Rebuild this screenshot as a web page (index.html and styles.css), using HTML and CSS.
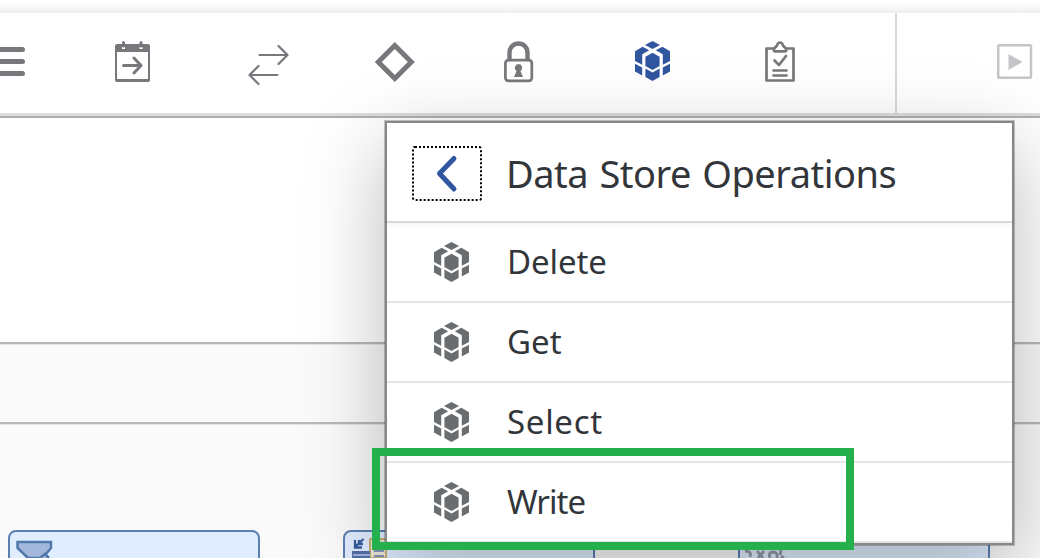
FILE: index.html
```html
<!DOCTYPE html>
<html lang="en">
<head>
<meta charset="utf-8">
<title>Data Store Operations</title>
<link rel="stylesheet" href="styles.css">
</head>
<body>
<svg class="defs" aria-hidden="true">
  <symbol id="cube" viewBox="0 0 35 40">
    <path d="M17.500 0l7.500 4-7.500 4-7.500-4zM0 10.300L7.600 5.800 14.200 9.300 7.200 13.200V23.700L0 20zM35 10.300L27.400 5.800 20.800 9.300 27.800 13.200V23.700L35 20zM17.500 11.700l7.100 4v9.400l-7.100 3.900-7.100-3.900v-9.400zM0 22.800l7.200 3.800v8L0 30.400zM35 22.800l-7.200 3.800v8l7.200-4.200zM10.400 27.500l7.100 4 7.100-4V36l-7.100 4-7.100-4z"/>
  </symbol>
</svg>
<div class="app">
  <div class="topband"></div>
  <header class="toolbar">
    <svg class="tool" width="25" height="46" viewBox="0 40 25 46"><path class="stroke w5" d="M-5 49.500H22.500M-5 61.500H22.500M-5 73.500H22.500"/></svg>
    <svg class="tool calendar" width="36" height="46" viewBox="115 40 36 46"><path class="stroke w3" d="M123.500 42.500V46M141 42.500V46"/><path fill-rule="evenodd" d="M117 44H148Q150 44 150 46V80Q150 82 148 82H117Q115 82 115 80V46Q115 44 117 44zM117 52V79H148V52zM122 47V49H125V47zM139.500 47V49H142.500V47z"/><path class="stroke w3" d="M123.500 65.500H141M134 58L141 65.500 134 73"/></svg>
    <svg class="tool arrows" width="42" height="46" viewBox="248 40 42 46"><path class="stroke w2" d="M259.500 55H287M278.500 46L287.500 55 278.500 64M277.500 75H250M258.500 66L249.500 75 258.500 84"/></svg>
    <svg class="tool diamond" width="40" height="46" viewBox="375 40 40 46"><path class="stroke w5 miter" d="M394.800 45.500L411.300 62 394.800 78.500 378.300 62z"/></svg>
    <svg class="tool lock" width="30" height="46" viewBox="504 40 30 46"><path class="stroke w4" d="M509.500 59V52.500a9 9 0 0 1 18 0V59"/><rect class="stroke w2 h" x="505.400" y="60.200" width="26.400" height="20.600" rx="3"/><path d="M518.500 64a4 4 0 0 1 2 7.300L523 77H514L516.500 71.300A4 4 0 0 1 518.500 64z"/></svg>
    <svg class="tool store" width="35" height="40"><use href="#cube"/></svg>
    <svg class="tool clipboard" width="32" height="46" viewBox="764 40 32 46"><path class="stroke w2 h" d="M773 48.500H766.500V80.500H793.500V48.500H787"/><path class="stroke w2 h" d="M773.800 49L777 45.500C778 41.500 782 41.500 783 45.500L786.300 49V50Q786.300 51.300 785 51.300H775.200Q773.800 51.300 773.800 50z"/><path class="stroke w2 h" d="M774.500 60.500L779 65 786 56M773.500 70.500H786.500M773.500 75.500H786.500"/></svg>
    <span class="divider"></span>
    <svg class="tool play" width="36" height="46" viewBox="997 40 36 46"><rect x="998.200" y="45.200" width="32.800" height="32.600" rx="1"/><path d="M1008.500 54L1022.500 62 1008.500 70z"/></svg>
  </header>
  <main class="canvas">
    <div class="lane-blank"></div>
    <div class="lane-title"></div>
    <div class="lane">
      <div class="step"><svg width="52" height="28" viewBox="8 530 52 28"><path d="M17.500 542H51V548L42.500 558H28L17.500 548z" fill="#a3b8da" stroke="#5078ab" stroke-width="2.500"/><path d="M40 558L45 554 49 558" fill="#a9bede" stroke="#5078ab" stroke-width="2.500"/></svg></div>
      <div class="step"><svg width="52" height="28" viewBox="343 530 52 28"><path d="M363.500 539L355 547M355 540V547.500H362M359 540V544H363" fill="none" stroke="#345d9e" stroke-width="2.300"/><path d="M370 539H386V558H370z" fill="#eee8d6" stroke="#c6af75" stroke-width="2"/><path d="M352 551H370V558H352z" fill="#546fa9"/><path d="M353 555H370" stroke="#b7c9ed" stroke-width="1.500"/><path d="M374 551H384M374 556H384" stroke="#8492bd" stroke-width="2"/></svg></div>
      <div class="step"><svg width="52" height="28" viewBox="738 530 52 28"><path d="M745 551Q752 551 750 557M757 551L763 558M758 558L764 551M770 558Q768 552 773 552 778 552 777 558M781 550L780 555M784 558L781 556" fill="none" stroke="#929ba8" stroke-width="2.800"/></svg></div>
    </div>
  </main>
</div>
<section class="menu">
  <div class="menu-head">
    <button class="back" aria-label="Back"><svg width="24" height="40" viewBox="0 0 24 40"><path d="M19 4.500L4.500 19.500 19 35"/></svg></button>
    <h1>Data Store Operations</h1>
  </div>
  <div class="item"><svg width="35" height="40"><use href="#cube"/></svg><span class="t-delete">Delete</span></div>
  <div class="item"><svg width="35" height="40"><use href="#cube"/></svg><span class="t-get">Get</span></div>
  <div class="item"><svg width="35" height="40"><use href="#cube"/></svg><span class="t-select">Select</span></div>
  <div class="item"><svg width="35" height="40"><use href="#cube"/></svg><span class="t-write">Write</span></div>
</section>
<div class="highlight"></div>
</body>
</html>
```
FILE: styles.css
```css
* { box-sizing: border-box; }
body { margin: 0; width: 1040px; height: 558px; overflow: hidden; position: relative; background: #fff; font-family: "Noto Sans", "Open Sans", sans-serif; color: #32363a; }
.defs { position: absolute; width: 0; height: 0; }
.app { height: 558px; display: flex; flex-direction: column; overflow: hidden; }
.topband { height: 13px; flex: none; background: linear-gradient(#fff 15%, #f8f8f8 60%, #ededed); }
.toolbar { height: 105px; flex: none; display: flex; align-items: flex-start; border-bottom: 2px solid #b0b0b0; box-shadow: inset 0 -3px #dcdcdc; }
.tool { flex: none; margin-top: 27px; fill: #77787b; overflow: hidden; }
.calendar { margin-left: 90px; }
.arrows { margin-left: 97px; }
.diamond { margin-left: 85px; }
.lock { margin-left: 89px; }
.store { margin: 28px 0 0 101px; fill: #3156a0; }
.clipboard { margin-left: 94px; }
.divider { flex: none; width: 2px; height: 100px; margin-left: 99px; background: #d9d9d9; }
.play { margin-left: 100px; fill: #c3c5c8; }
.play rect { fill: none; stroke: #c3c5c8; stroke-width: 2.5px; }
.stroke { fill: none; stroke: #77787b; stroke-linecap: round; stroke-linejoin: round; }
.w2 { stroke-width: 2.2px; }
.w3 { stroke-width: 3px; }
.w4 { stroke-width: 4.4px; }
.w5 { stroke-width: 5px; }
.h { stroke-width: 2.7px; }
.miter { stroke-linejoin: miter; }
.canvas { flex: 1; display: flex; flex-direction: column; }
.lane-blank { height: 224px; flex: none; }
.lane-title { height: 80px; flex: none; background: #fafafa; border-top: 2px solid #b8b8b8; box-shadow: inset 0 1px #e5e5e5; }
.lane { flex: 1; display: flex; padding: 106px 0 0 8px; background: #fafafa; border-top: 2px solid #b8b8b8; box-shadow: inset 0 1px #e5e5e5; }
.step { flex: none; width: 252px; height: 50px; border: 2px solid #5a7fb2; border-radius: 8px; background: #e0edff; overflow: hidden; }
.step svg { display: block; margin: -2px 0 0 -2px; }
.step:nth-child(2) { margin-left: 83px; }
.step:nth-child(3) { margin-left: 143px; }
.menu { position: absolute; left: 385px; top: 121px; width: 629px; height: 424px; border: 2px solid #888; background: #fff; box-shadow: 0 0 0 1px rgba(0, 0, 0, .22), 0 25px 76px rgba(0, 0, 0, .27); }
.menu-head { height: 100px; display: flex; padding: 23px 0 0 25px; border-bottom: 2px solid #d9d9d9; box-shadow: 0 2px 5px rgba(0, 0, 0, .05); }
.back { width: 70px; height: 55px; padding: 0; border: 2px dotted #000; border-radius: 3px; background: #fff; display: flex; align-items: center; justify-content: center; }
.back path { fill: none; stroke: #3156a0; stroke-width: 5px; stroke-linecap: round; stroke-linejoin: round; }
h1 { margin: 0 0 0 24px; font-size: 38px; line-height: 54px; font-weight: 400; letter-spacing: -.5px; word-spacing: 2px; white-space: nowrap; }
.item { height: 80px; display: flex; align-items: center; padding: 0 0 1px 47px; border-bottom: 2px solid #e5e5e5; font-size: 33px; line-height: 48px; }
.item svg { flex: none; fill: #6a6d70; }
.item span { margin-left: 38px; }
.item .t-select { letter-spacing: .7px; }
.item .t-write { letter-spacing: -1px; }
.item .t-delete { letter-spacing: -.1px; }
.highlight { position: absolute; left: 372px; top: 448px; width: 482px; height: 102px; border: 8px solid #24b14d; }
```
